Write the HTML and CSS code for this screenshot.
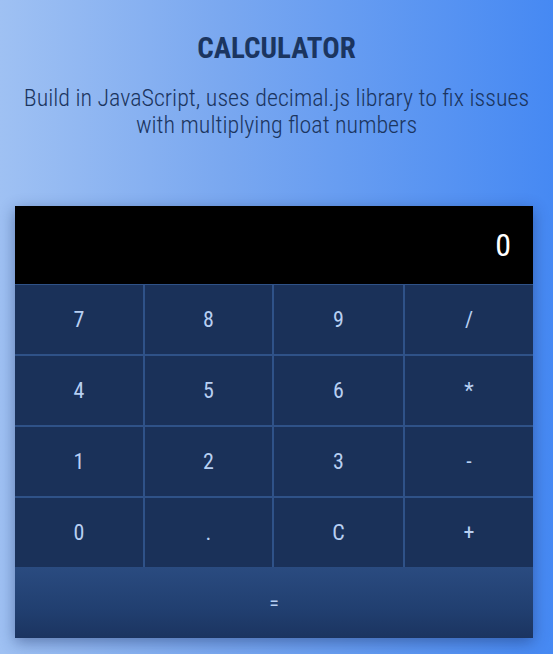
FILE: index.html
```html
<!DOCTYPE html>
<html>
<head>
<meta charset="utf-8">
<link rel="stylesheet" href="styles.css">
</head>
<body>
<header class="head">
  <h1 class="title">CALCULATOR</h1>
  <p class="sub">Build in JavaScript, uses decimal.js library to fix issues with multiplying float numbers</p>
</header>
<main class="calc">
  <div class="display">0</div>
  <div class="keys">
    <button class="key">7</button>
    <button class="key">8</button>
    <button class="key">9</button>
    <button class="key">/</button>
    <button class="key">4</button>
    <button class="key">5</button>
    <button class="key">6</button>
    <button class="key">*</button>
    <button class="key">1</button>
    <button class="key">2</button>
    <button class="key">3</button>
    <button class="key">-</button>
    <button class="key">0</button>
    <button class="key">.</button>
    <button class="key">C</button>
    <button class="key">+</button>
  </div>
  <button class="equals">=</button>
</main>
</body>
</html>
```
FILE: styles.css
```css
* { box-sizing: border-box; }
html, body { margin: 0; height: 100%; }
body {
  background: linear-gradient(90deg, #9fc1f3 0%, #7aa8f0 40%, #4689f3 100%);
  font-family: Roboto, "Noto Sans", sans-serif;
  font-stretch: 80%;
  color: #1b3560;
  overflow: hidden;
}
.head {
  text-align: center;
  padding-top: 30px;
}
.title {
  margin: 0;
  font-size: 29px;
  font-weight: 700;
  line-height: 36px;
}
.sub {
  margin: 19px auto 0;
  width: 520px;
  font-size: 24px;
  font-weight: 300;
  line-height: 27px;
}
.calc {
  margin: 67px 0 0 15px;
  width: 518px;
  box-shadow: 0 4px 14px rgba(20, 40, 90, 0.45);
}
.display {
  height: 78px;
  background: #000;
  color: #fff;
  font-size: 32px;
  text-align: right;
  padding: 21px 22px 0 0;
  line-height: 36px;
}
.keys {
  display: grid;
  grid-template-columns: 128px 127px 129px 1fr;
  grid-auto-rows: 69px;
  gap: 2px;
  background: #2f5288;
  border-top: 1px solid #2f5288;
}
.key, .equals {
  border: 0;
  margin: 0;
  font-family: Roboto, "Noto Sans", sans-serif;
  font-stretch: 80%;
  font-size: 22px;
  color: #b7cff2;
  background: #1a3159;
  padding: 0;
}
.equals {
  display: block;
  width: 100%;
  height: 71px;
  background: linear-gradient(180deg, #2a4b80 0%, #213f70 60%, #1b3460 100%);
  font-size: 20px;
}
```
